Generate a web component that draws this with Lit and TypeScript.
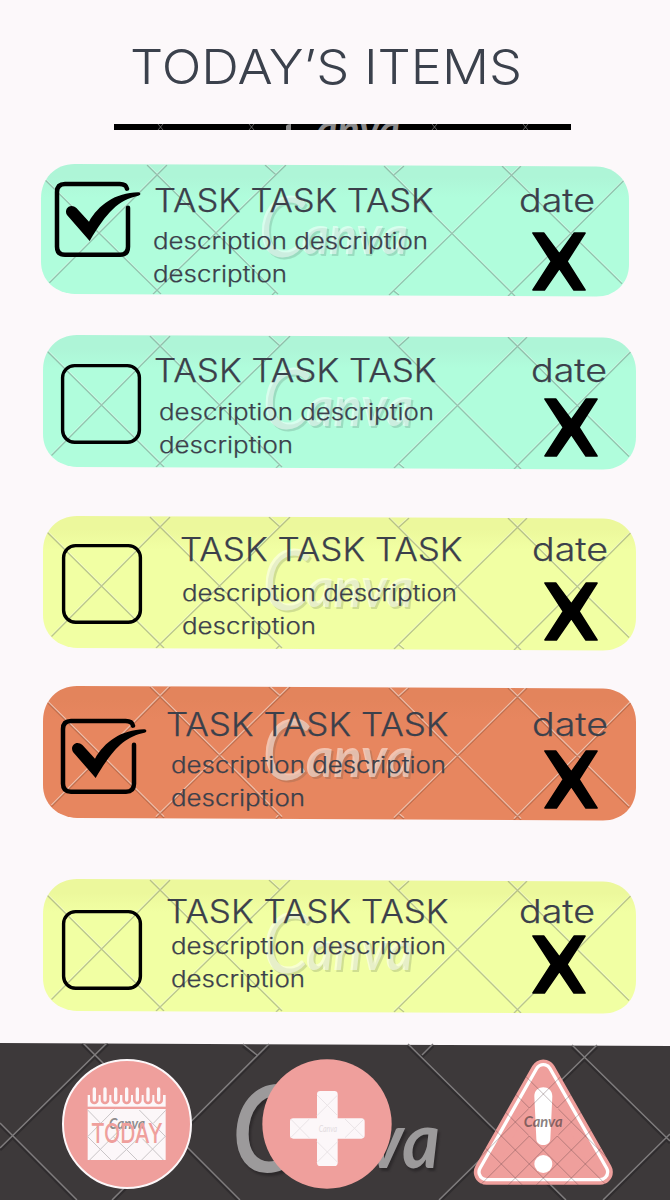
import { LitElement, html, svg, css } from "lit";
import { customElement, property } from "lit/decorators.js";
import { classMap } from "lit/directives/class-map.js";

type Tone = "green" | "yellow" | "orange";

interface Task {
  id: string;
  tone: Tone;
  done: boolean;
  titleWidth: number;
}

const TASKS: Task[] = [
  { id: "first", tone: "green", done: true, titleWidth: 279.5 },
  { id: "second", tone: "green", done: false, titleWidth: 282.5 },
  { id: "third", tone: "yellow", done: false, titleWidth: 282.5 },
  { id: "fourth", tone: "orange", done: true, titleWidth: 282.5 },
  { id: "fifth", tone: "yellow", done: false, titleWidth: 282.5 },
];

const TONES: Record<Tone, string[]> = {
  green: ["#aef5d7", "#b0fddc"],
  yellow: ["#ecf89c", "#f1ffa3"],
  orange: ["#e3845c", "#e7865f"],
};

// One run of text set to an exact width.
const fit = (text: string, x: number, y: number, width: number, cls: string) =>
  svg`<text class=${cls} x=${x} y=${y} textLength=${width} lengthAdjust="spacingAndGlyphs">${text}</text>`;

// Watermark word: a tall initial followed by smaller letters.
const wordmark = (x: number, y: number, capWidth: number, lowX: number, lowY: number, lowWidth: number) =>
  svg`<text class="mark"><tspan class="cap" x=${x} y=${y} textLength=${capWidth} lengthAdjust="spacingAndGlyphs">C</tspan><tspan class="low" x=${lowX} y=${lowY} textLength=${lowWidth} lengthAdjust="spacingAndGlyphs">anva</tspan></text>`;

const CARD_SHAPE =
  "M0 35C0 15 14 0 34 0L560 2.500C580 3 593 18 593 36V102C593 121 579 134.500 560 134.500L34 132C14 131 0 118 0 99Z";
const CARD_LINES =
  "M4 16L121 132M8.500 120.500L127 1M107 1L239 132M113 132L247 1M226 1L237 11M346 2L478 134M351 133L484 2M356 129L361 133M356 11L366 2M233 133L237 129M465 2L586 121.500M471 134L588 16.500";

@customElement("card-surface")
class CardSurface extends LitElement {
  @property() tone: Tone = "green";

  static styles = css`
    :host { position: absolute; inset: 0; }
    svg { display: block; width: 100%; height: 100%; overflow: visible; }
    .light { stroke: #fff; stroke-opacity: 0.34; stroke-width: 1.2; fill: none; }
    .dark { stroke: #47524c; stroke-opacity: 0.32; stroke-width: 1.4; fill: none; }
    .orange .light { stroke-opacity: 0.5; stroke-width: 1.6; }
    .orange .dark { stroke: #8a3f20; stroke-opacity: 0.42; }
    .mark { font-family: Lato, sans-serif; font-style: italic; fill: #fff; fill-opacity: 0.5; filter: drop-shadow(2px 2px 0.6px rgba(50, 70, 60, 0.35)); }
    .cap { font-size: 86px; font-weight: 400; }
    .low { font-size: 55px; font-weight: 700; }
  `;

  render() {
    const [top, base] = TONES[this.tone];
    return html`<svg class=${this.tone} viewBox="0 0 593 135" preserveAspectRatio="none">
      <defs>
        <linearGradient id="g" x1="0" y1="0" x2="0" y2="1">
          <stop offset="0" stop-color=${top} /><stop offset="0.100" stop-color=${top} /><stop offset="0.250" stop-color=${base} />
        </linearGradient>
        <clipPath id="c"><path d=${CARD_SHAPE} /></clipPath>
      </defs>
      <path d=${CARD_SHAPE} fill="url(#g)" />
      <g clip-path="url(#c)">
        <path class="light" d=${CARD_LINES} transform="translate(0 -1.200)" />
        <path class="dark" d=${CARD_LINES} />
      </g>
      ${wordmark(219, 94, 47, 263, 91, 107)}
    </svg>`;
  }
}

@customElement("task-card")
class TaskCard extends LitElement {
  @property({ attribute: false }) task!: Task;

  static styles = css`
    :host { display: block; position: relative; height: 135px; font-family: Inter, "Open Sans", sans-serif; }
    .row { display: flex; align-items: flex-start; }
    svg { display: block; overflow: visible; flex: none; }
    .check { margin: var(--cy) 0 0 var(--cx); }
    .copy { width: 281px; margin: var(--ty) 0 0 var(--tx); }
    .desc { margin: var(--dy) 0 0 var(--dx); }
    .side { width: 74px; margin: var(--sy) 0 0 var(--sx); }
    .remove { margin: var(--xy) 0 0 var(--xx, 12px); }
    text { font-weight: 300; fill: #3b404b; stroke: #3b404b; stroke-width: 0.25; }
    .title { font-size: 32px; }
    .body { font-size: 22.5px; }
    .date { font-size: 32.5px; }
    .first { --cx: 14px; --cy: 18px; --tx: 9px; --ty: 24px; --dx: -3.5px; --dy: 20px; --sx: 83px; --sy: 23px; --xy: 20px; }
    .second { --cx: 18px; --cy: 29px; --tx: 3px; --ty: 23px; --dx: 2.5px; --dy: 21px; --sx: 95px; --sy: 22px; --xy: 16px; }
    .third { --cx: 19px; --cy: 28px; --tx: 28px; --ty: 21px; --dx: -0.5px; --dy: 23px; --sx: 70px; --sy: 20px; --xy: 21px; --xx: 11px; }
    .fourth { --cx: 18px; --cy: 33px; --tx: 15px; --ty: 26px; --dx: 3px; --dy: 20px; --sx: 84px; --sy: 25px; --xy: 14px; --xx: 11px; }
    .fifth { --cx: 19px; --cy: 31px; --tx: 14px; --ty: 20px; --dx: 3px; --dy: 14px; --sx: 71px; --sy: 19px; --xy: 12px; }
  `;

  render() {
    const { id, done, titleWidth } = this.task;
    return html`
      <div class=${classMap({ row: true, [id]: true })}>
        ${done
          ? html`<svg class="check" width="92" height="75" viewBox="0 0 276 225">
              <path d="M216 20Q213 6 194 6H30Q6 6 6 30V194Q6 218 30 218H195Q219 218 219 194V77" fill="none" stroke="#000" stroke-width="13.500" stroke-linecap="round" />
              <path d="M36 99C25 80 47 61 65 79L102 119C130 70 180 32 250 31C258 32 258 40 250 41C190 54 155 90 104 177Z" />
            </svg>`
          : html`<svg class="check" width="92" height="80" viewBox="0 0 92 80">
              <rect x="1.600" y="1.600" width="76.800" height="76.600" rx="12" fill="none" stroke="#000" stroke-width="3.400" />
            </svg>`}
        <div class="copy">
          <svg width="281" height="24">${fit("TASK TASK TASK", -2, 24, titleWidth, "title")}</svg>
          <svg class="desc" width="274" height="50">
            ${fit("description description", 0, 17, 275, "body")}
            ${fit("description", 0, 50, 134, "body")}
          </svg>
        </div>
        <div class="side">
          <svg width="74" height="25">${fit("date", -1, 25, 76, "date")}</svg>
          <svg class="remove" width="54" height="59" viewBox="0 0 162 177">
            <path d="M3 3H35L82 66L127 3H159L105 88L159 174H126L82 109L37 174H3L58 88Z" stroke="#000" stroke-width="5" stroke-linejoin="round" />
          </svg>
        </div>
      </div>
    `;
  }
}

const BAR_LINES =
  "M0 105L108 -1M82 -1L240 157M0 80L77 157M112 157L269 1M243 1L257 12M408 1L566 157M422 12L433 1M439 157L597 2M572 2L670 98M603 157L670 91";

@customElement("bottom-bar")
class BottomBar extends LitElement {
  static styles = css`
    :host { display: block; position: relative; height: 157px; }
    svg { display: block; overflow: hidden; }
    .bg { position: absolute; inset: 0; }
    .items { position: relative; display: flex; align-items: flex-start; padding: 15px 55px 0 61px; }
    .add { margin: 0 81px 0 69px; }
    .shadow { stroke: #222021; stroke-width: 3; stroke-opacity: 0.5; fill: none; }
    .line { stroke: #7f7c7d; stroke-width: 1.5; fill: none; }
    .mark { font-family: Lato, sans-serif; font-style: italic; fill: #9c9a9b; filter: drop-shadow(2px 3px 1px rgba(20, 18, 19, 0.4)); }
    .cap { font-size: 118px; font-weight: 400; stroke: #9c9a9b; stroke-width: 2; }
    .low { font-size: 79px; font-weight: 700; }
    .today { font-family: Inter, sans-serif; font-size: 82px; font-weight: 500; fill: #ef9f9c; }
    .small { font-family: Lato, sans-serif; font-style: italic; font-weight: 700; font-size: 43px; fill: #8e8c8d; }
    .dim { font-family: Lato, sans-serif; font-style: italic; font-weight: 700; font-size: 46px; fill: #4f3f42; fill-opacity: 0.68; }
    .faint { font-family: Lato, sans-serif; font-style: italic; font-size: 28px; fill: #e3dcdf; }
  `;

  render() {
    const prongs = [283, 315, 347, 380, 412, 444, 476];
    return html`
      <svg class="bg" width="670" height="157" viewBox="0 0 670 157">
        <path d="M0 0L670 3V157H0Z" fill="#3d393a" />
        <path class="shadow" d=${BAR_LINES} transform="translate(0 2)" />
        <path class="line" d=${BAR_LINES} />
        ${wordmark(232, 128, 68, 292, 125, 148)}
      </svg>
      <div class="items">
        <svg width="132" height="132" viewBox="183 69 396 396">
          <circle cx="381" cy="267" r="192" fill="#ef9f9c" stroke="#fcf7f9" stroke-width="6" />
          <rect x="263" y="180" width="234" height="35" fill="#fcf7f9" />
          ${prongs.map(
            (x) => svg`<rect x=${x - 13} y="150" width="26" height="58" rx="13" fill="#ef9f9c" /><rect x=${x - 5} y="157" width="10" height="43" rx="5" fill="#fcf7f9" />`,
          )}
          <rect x="263" y="222" width="234" height="153" fill="#fcf7f9" />
          <path d="M263 225L302 265M263 305L333 375M269 375L381 263M263 305L343 224M346 375L420 305M381 345L411 375M340 305L381 345M425 375L497 303M497 305L418 225M427 311L490 375M460 265L497 226" stroke="#c9c5c7" stroke-width="3" fill="none" />
          ${fit("Canva", 327, 282, 108, "small")}
          ${fit("TODAY", 273, 323, 215, "today")}
        </svg>
        <svg class="add" width="130" height="132" viewBox="126 69 390 396">
          <circle cx="321" cy="267" r="194" fill="#ef9f9c" />
          <path d="M301 168H343Q353 168 353 178V250H424Q434 250 434 260V301Q434 311 424 311H353V383Q353 393 343 393H301Q291 393 291 383V311H220Q210 311 210 301V260Q210 250 220 250H291V178Q291 168 301 168Z" fill="#fcf7f9" />
          <path d="M291 180L353 242M353 180L291 242M212 252L270 311M212 308L268 252M375 252L432 308M375 308L432 252M291 320L353 382M353 320L291 382" stroke="#eae4e7" stroke-width="3" />
          ${fit("Canva", 296, 290, 55, "faint")}
        </svg>
        <svg width="141" height="132" viewBox="101 69 423 396">
          <defs>
            <clipPath id="inside"><path d="M279 93Q312 50 345 93L515 390Q535 450 484 449H140Q90 446 109 390Z" /></clipPath>
            <clipPath id="around"><path clip-rule="evenodd" d="M90 60H540V460H90ZM268 219V303H357V219Z" /></clipPath>
          </defs>
          <path d="M312 112L142 411H482Z" fill="#ef9f9c" stroke="#ef9f9c" stroke-width="77" stroke-linejoin="round" />
          <path d="M312 112L142 411H482Z" fill="#fff" stroke="#fff" stroke-width="56" stroke-linejoin="round" />
          <path d="M312 112L142 411H482Z" fill="#ef9f9c" stroke="#ef9f9c" stroke-width="36" stroke-linejoin="round" />
          <path d="M285 184C285 148 339 148 339 184L333 312C332 336 292 336 291 312Z" fill="#fff" />
          <circle cx="312" cy="387" r="27" fill="#fff" />
          <g clip-path="url(#inside)"><g clip-path="url(#around)">
            <path d="M235 100L595 460M151 100L511 460M67 100L427 460M-17 100L343 460M-101 100L259 460M389 100L29 460M473 100L113 460M557 100L197 460M641 100L281 460M725 100L365 460" stroke="#533c40" stroke-opacity="0.430" stroke-width="2.500" />
          </g></g>
          ${fit("Canva", 253, 277, 117, "dim")}
        </svg>
      </div>
    `;
  }
}

@customElement("app-root")
class AppRoot extends LitElement {
  static styles = css`
    :host { display: flex; flex-direction: column; width: 670px; height: 1200px; overflow: hidden; background: #fcf8fa; font-family: Inter, "Open Sans", sans-serif; }
    svg { display: block; }
    header { height: 164px; flex: none; }
    .heading { overflow: visible; margin: 48px 0 0 132px; }
    .headline { font-size: 48px; font-weight: 300; fill: #3b414c; }
    .rule { margin: 40px 0 0 114px; }
    .mark { font-family: Lato, sans-serif; font-style: italic; font-weight: 700; font-size: 43px; fill: #8b8b8b; }
    main { flex: 1; display: flex; flex-direction: column; padding: 0 34px 0 43px; }
    .slot { position: relative; flex: none; height: 135px; }
    .first { margin: 0 7px 0 -2px; height: 133px; }
    .second { margin-top: 38px; }
    .third { margin-top: 46px; }
    .fourth { margin-top: 35px; }
    .fifth { margin-top: 58px; }
    bottom-bar { flex: none; }
  `;

  render() {
    return html`
      <header>
        <svg class="heading" width="388" height="36">${fit("TODAY’S ITEMS", -2, 36, 392, "headline")}</svg>
        <svg class="rule" width="457" height="6" viewBox="0 0 457 6">
          <rect width="457" height="6" fill="#000" />
          <path d="M44 0L49 6M49 0L44 6M135 0L140 6M140 0L135 6M318 0L323 6M323 0L318 6M409 0L414 6M414 0L409 6" stroke="#777" stroke-width="0.800" />
          <path d="M172 6V2Q173 0 177 0V6Z" fill="#8b8b8b" />
          ${fit("anva", 202, 21, 84, "mark")}
        </svg>
      </header>
      <main>
        ${TASKS.map(
          (task) => html`<div class=${classMap({ slot: true, [task.id]: true })}>
            <card-surface tone=${task.tone}></card-surface>
            <task-card .task=${task}></task-card>
          </div>`,
        )}
      </main>
      <bottom-bar></bottom-bar>
    `;
  }
}
